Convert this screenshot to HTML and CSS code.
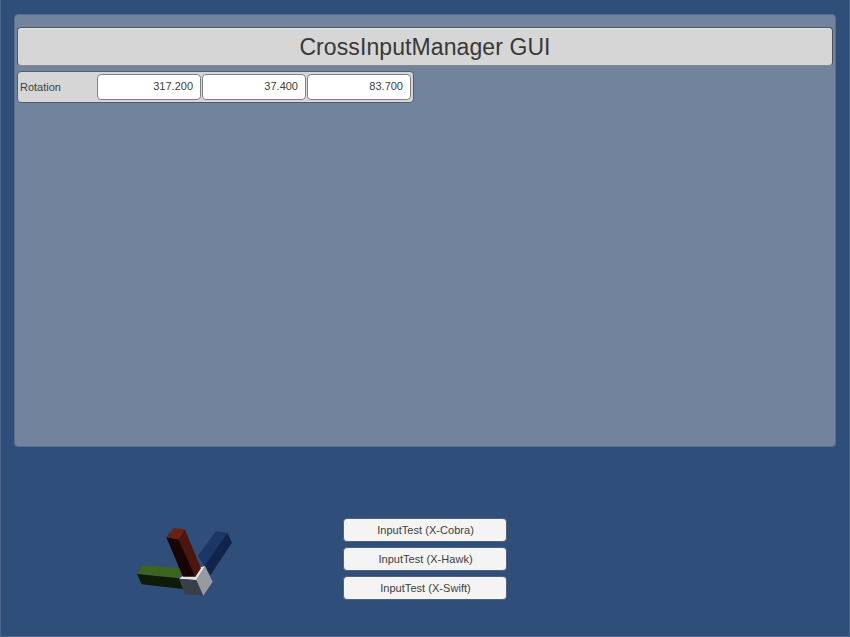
FILE: index.html
```html
<!DOCTYPE html>
<html lang="en">
<head>
<meta charset="utf-8">
<title>CrossInputManager GUI</title>
<link rel="stylesheet" href="styles.css">
</head>
<body>
<main class="screen">
  <section class="panel">
    <h1 class="title">CrossInputManager GUI</h1>
    <div class="row">
      <span class="label">Rotation</span>
      <span class="field">317.200</span>
      <span class="field">37.400</span>
      <span class="field">83.700</span>
    </div>
  </section>
  <section class="lower">
    <svg class="gizmo" viewBox="0 0 360 255" width="120" height="85">
      <path fill="#1a3768" d="M273 34 307 38 240 140 218 108Z"/>
      <path fill="#11244b" d="M307 38 321 68 256 166 238 139Z"/>
      <path fill="#3c6520" d="M52 136 170 145 164 176 36 162Z"/>
      <path fill="#0e1b09" d="M36 162 164 175 174 207 50 193Z"/>
      <path fill="#e2e2e5" d="M162 176 174 167 212 165 226 142 241 138 214 181Z"/>
      <path fill="#3a3e48" d="M162 176 214 180 235 227 180 223Z"/>
      <path fill="#9799a3" d="M214 179 240 138 263 185 235 227Z"/>
      <path fill="#180403" d="M124 52 161 58 212 170 174 170Z"/>
      <path fill="#4c160e" d="M160 58 179 28 228 145 211 170Z"/>
      <path fill="#6a2013" d="M146 24 179 28 160 58 124 52Z"/>
    </svg>
    <div class="buttons">
      <button class="button">InputTest (X-Cobra)</button>
      <button class="button">InputTest (X-Hawk)</button>
      <button class="button">InputTest (X-Swift)</button>
    </div>
  </section>
</main>
</body>
</html>
```
FILE: styles.css
```css
* { box-sizing: border-box; }
body {
  margin: 0;
  background: #304e7a;
  font-family: "Liberation Sans", Arial, sans-serif;
  font-size: 11px;
  color: #404040;
}
.screen {
  height: 637px;
  padding: 14px 13px 0;
  border: solid #4c658b;
  border-width: 0 1px 1px;
  overflow: hidden;
}
.panel {
  height: 433px;
  padding: 12px 2px;
  border: 1px solid #596e8e;
  border-radius: 4px;
  background: #72839d;
}
.title {
  height: 39px;
  margin: 0;
  border: 1px solid #4c5566;
  border-bottom-color: #858585;
  border-radius: 4px;
  background: #d6d6d6;
  box-shadow: inset 0 1px #e4e4e4;
  text-align: center;
  font-size: 23px;
  font-weight: 400;
  line-height: 38px;
  letter-spacing: 0.09px;
  color: #383838;
}
.row {
  display: flex;
  align-items: center;
  gap: 1px;
  width: 397px;
  height: 32px;
  margin-top: 5px;
  padding: 0 2px;
  border: 1px solid #535c6b;
  border-radius: 4px;
  background: #d6d6d6;
}
.label { width: 76px; }
.field {
  width: 104px;
  height: 26px;
  padding-right: 7px;
  border: 1px solid #828282;
  border-radius: 4px;
  background: #fff;
  text-align: right;
  line-height: 23px;
}
.lower {
  display: flex;
  align-items: flex-start;
  padding: 71px 0 0 111px;
}
.gizmo { margin-top: 2px; }
.buttons {
  display: flex;
  flex-direction: column;
  gap: 5px;
  margin-left: 98px;
}
.button {
  width: 164px;
  height: 24px;
  padding: 0 0 0 1px;
  border: 1px solid #52617a;
  border-radius: 4px;
  background: #f4f4f4;
  font: inherit;
  line-height: 21px;
  letter-spacing: 0.04px;
  color: #404040;
}
```
